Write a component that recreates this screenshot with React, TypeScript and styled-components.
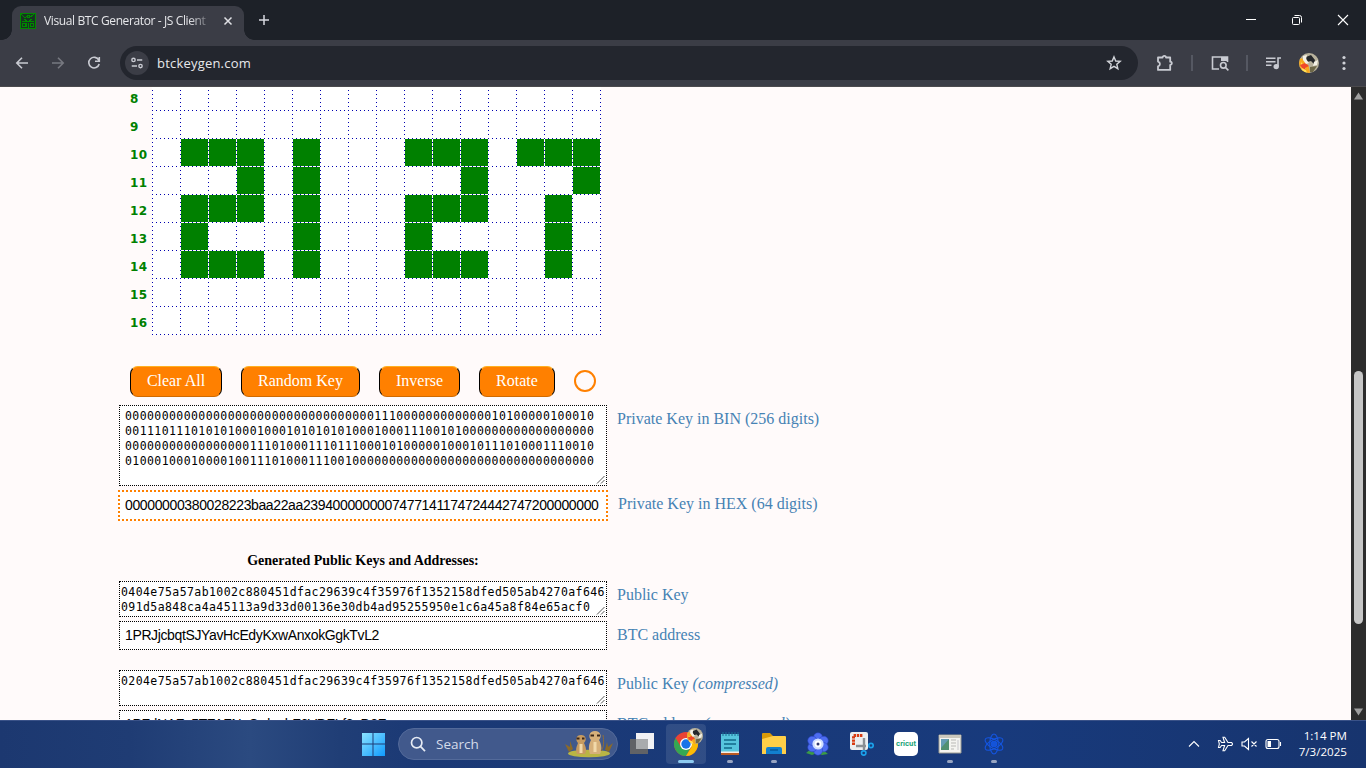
import React from "react";
import styled, { createGlobalStyle } from "styled-components";

const Global = createGlobalStyle`
  * { box-sizing: border-box; }
  body { margin: 0; overflow: hidden; }
`;

const ui = `"Open Sans", "Noto Sans", sans-serif`;
const sans = `"Liberation Sans", Arial, sans-serif`;
const serif = `"Liberation Serif", "Times New Roman", serif`;

const Screen = styled.div`
  width: 1366px; height: 768px; display: flex; flex-direction: column; overflow: hidden;
`;

/* ---------- browser chrome ---------- */
const TabStrip = styled.div`
  height: 40px; flex: none; background: #1d2128; display: flex; padding: 6px 0 0 12px;
`;
const Tab = styled.div`
  position: relative; width: 232px; height: 34px; background: #3b3d46; border-radius: 9px 9px 0 0;
  display: flex; align-items: center; padding: 0 10px 5px 8px;
  &::before, &::after {
    content: ""; position: absolute; bottom: 0; width: 10px; height: 10px;
  }
  &::before { left: -10px; background: radial-gradient(circle at 0 0, #1d2128 9.5px, #3b3d46 10px); }
  &::after { right: -10px; background: radial-gradient(circle at 100% 0, #1d2128 9.5px, #3b3d46 10px); }
`;
const TabTitle = styled.div`
  width: 168px; margin-left: 8px; flex: none; white-space: nowrap;
  font: 12px/16px ${ui}; letter-spacing: -0.38px; color: #e6e7ea;
  mask-image: linear-gradient(90deg, #000 145px, transparent 170px);
`;
const CloseIcon = styled.svg`margin-left: 11px; flex: none;`;
const PlusIcon = styled.svg`margin: 7px 0 0 13px;`;
const WindowButtons = styled.div`
  margin-left: auto; display: flex; gap: 34px; padding: 8px 17px 0 0; height: 20px;
`;
const Toolbar = styled.div`
  height: 47px; flex: none; background: #3b3d46; border-bottom: 1px solid #4b4a4d;
  display: flex; align-items: center; padding: 0 14px;
`;
const NavIcons = styled.div`display: flex; gap: 20px; width: 106px;`;
const AddressBar = styled.div`
  width: 1018px; height: 34px; border-radius: 17px; background: #23262e;
  display: flex; align-items: center; padding: 0 16px 0 5px;
  font: 13px/20px ${ui}; color: #e7e8eb; letter-spacing: 0.2px;
`;
const SiteChip = styled.div`
  width: 24px; height: 24px; border-radius: 50%; background: #3b3d46; margin-right: 8px;
  display: grid; place-items: center;
`;
const StarIcon = styled.svg`margin-left: auto;`;
const ToolIcons = styled.div`
  flex: 1; display: flex; align-items: center; justify-content: space-between; padding-left: 18px;
`;
const Divider = styled.i`width: 2px; height: 16px; background: #555862;`;

/* ---------- page ---------- */
const Viewport = styled.div`height: 633px; display: flex; overflow: hidden; background: #fffafa;`;
const Page = styled.main`flex: 1; padding-left: 118px; margin-top: -5px;`;
const Board = styled.div`display: flex; height: 253px;`;
const RowLabels = styled.div`
  width: 34px; padding: 3px 0 0 12px; font: bold 12px/28px "DejaVu Sans", Verdana, sans-serif;
  letter-spacing: 0.3px; color: green;
`;
const dotX = `repeating-linear-gradient(90deg, #0000b0 0 1px, #fff 1px 4px)`;
const dotY = `repeating-linear-gradient(180deg, #0000b0 0 1px, #fff 1px 4px)`;
const Grid = styled.div`
  width: 449px; height: 253px; padding: 0 1px 1px 0; background:
    ${dotX} 0 100% / 100% 1px no-repeat, ${dotY} 100% 0 / 1px 100% no-repeat, #fff;
  display: grid; grid-template-columns: repeat(16, 28px); grid-auto-rows: 28px;
`;
const Cell = styled.div<{ $on: boolean }>`
  background: ${dotX} 0 0 / 100% 1px no-repeat, ${dotY} 0 0 / 1px 100% no-repeat,
    ${(p) => (p.$on ? "green" : "#fff")};
`;
const Actions = styled.div`display: flex; align-items: center; gap: 19px; padding: 31px 0 0 12px; height: 62px;`;
const Action = styled.button<{ $w: number }>`
  width: ${(p) => p.$w}px; height: 31px; padding: 0 0 1px; border: 1px solid #000; border-top-color: #ffb020;
  border-bottom-color: #d06a00; border-radius: 8px; background: #ff8000; color: #fff; white-space: nowrap;
  font: 16px/20px ${serif};
`;
const Ring = styled.i`width: 22px; height: 22px; border: 2px solid #ff8000; border-radius: 50%; margin-top: -2px;`;

const Field = styled.div<{ $mt: number }>`display: flex; margin-top: ${(p) => p.$mt}px;`;
const Box = styled.div<{ $h: number; $kind: "bin" | "hex" | "key" | "addr" }>`
  width: ${(p) => (p.$kind === "hex" ? 490 : 488)}px; height: ${(p) => p.$h}px; flex: none;
  margin-left: ${(p) => (p.$kind === "hex" ? 0 : 1)}px;
  border: ${(p) => (p.$kind === "hex" ? "2px dotted #ff8000" : "1px dotted #000")};
  background: #fff; color: #000; white-space: pre; position: relative;
  ${(p) =>
    p.$kind === "bin" || p.$kind === "key"
      ? `font: 11.5px/15px "DejaVu Sans Mono", Consolas, monospace; letter-spacing: 0.408px;`
      : `font: 14px/15px ${sans}; letter-spacing: -0.372px;`}
  padding: ${(p) => ({ bin: "3px 5px", hex: "6px 5px", key: "3px 1px", addr: "6px 5px" })[p.$kind]};
`;
const Grip = styled.svg`position: absolute; right: 1px; bottom: 1px;`;
const Caption = styled.div<{ $top: number }>`
  padding: ${(p) => p.$top}px 0 0 10px; font: 16px/20px ${serif}; color: steelblue; white-space: nowrap;
`;
const Heading = styled.h4`
  margin: 30px 0 0; width: 490px; text-align: center; font: bold 14px/20px ${serif}; color: #000;
`;
const Scrollbar = styled.div`
  width: 15px; background: #2c2c2c; display: flex; flex-direction: column; align-items: center; padding: 5px 0 4px;
`;
const Thumb = styled.div`width: 9px; height: 253px; border-radius: 5px; background: #c6c6c6; margin: 271px 0 auto;`;

/* ---------- taskbar ---------- */
const Taskbar = styled.div`
  height: 48px; flex: none; display: flex; align-items: center; padding: 0 0 1px 361px; border-top: 1px solid #3a5288;
  background: linear-gradient(90deg, #1c3870 0, #1f3c74 130px, #2b4a80 250px, #203e76 340px, #1b3975 420px, #183a7c 1000px, #17346e);
  font-family: ${ui}; color: #fff;
`;
const SearchPill = styled.div`
  width: 220px; height: 32px; margin-left: 13px; border-radius: 16px; background: #41598c; border: 1px solid #536a9a;
  display: flex; align-items: center; padding: 0 3px 0 11px; font-size: 13.5px; color: #d5dcea;
  span { margin: 0 auto 0 10px; }
`;
const Apps = styled.div`display: flex; align-items: center; margin-left: 2px;`;
const AppSlot = styled.div<{ $active?: boolean; $dot?: boolean }>`
  position: relative; width: 44px; height: 46px; display: grid; place-items: center;
  &::before {
    content: ""; position: absolute; inset: 3px 2px; border-radius: 4px;
    background: ${(p) => (p.$active ? "rgba(255,255,255,.1)" : "none")};
  }
  &::after {
    content: ""; position: absolute; bottom: 4px; height: 3px; border-radius: 2px;
    left: ${(p) => (p.$active ? 14 : 19)}px; width: ${(p) => (p.$active ? 16 : 6)}px;
    background: ${(p) => (p.$active ? "#8ecbf0" : p.$dot ? "#98a5c2" : "none")};
  }
  svg { position: relative; }
`;
const Tray = styled.div`margin-left: auto; display: flex; align-items: center; padding-right: 19px;`;
const TrayIcon = styled.svg<{ $gap: number }>`
  flex: none; margin-left: ${(p) => p.$gap}px; fill: none; stroke: #fff; stroke-width: 1.1;
`;
const Clock = styled.div`
  width: 65px; text-align: right; font-size: 11.6px; line-height: 16px; white-space: nowrap; margin-top: 0;
`;

const rows = [
  "................", "................",
  ".###.#...###.###", "...#.#.....#...#", ".###.#...###..#.", ".#...#...#....#.", ".###.#...###..#.",
  "................", "................",
];

const Stroke = (p: React.SVGProps<SVGSVGElement>) => (
  <svg width="16" height="16" viewBox="0 0 16 16" fill="none" stroke="#c9cbd2" strokeWidth="1.6" {...p} />
);

const Avatar = () => (
  <svg width="20" height="20" viewBox="0 0 20 20">
    <clipPath id="av"><circle cx="10" cy="10" r="10" /></clipPath>
    <g clipPath="url(#av)">
      <path fill="#b8b29c" d="M0 0h20v20H0z" />
      <path fill="#f6a81c" d="M0 5l5 1 5 8 1 6H0z" />
      <path fill="#ffe257" d="M2 9l4 5 2 6H3z" />
      <path fill="#f0482a" d="M1 12l5-2 4 3-4 2 1 2-4-2z" />
      <path fill="#25272a" d="M7 4l5-2 4 5-1 4-3-3-4 1z" />
      <path fill="#f4f1e6" d="M4 3l4-1-1 4 3 4-3 1-3-4zM15 9l4-2-1 5-4 1z" />
      <path fill="#6e6848" d="M11 14l7-1-4 6h-3z" />
    </g>
  </svg>
);

const Handle = () => (
  <Grip width="9" height="9" viewBox="0 0 9 9" stroke="#444" strokeWidth=".9"><path d="M1 8.5 8.5 1M5 8.5 8.5 5" /></Grip>
);

const QrIcon = () => (
  <svg width="16" height="16" viewBox="0 0 16 16" shapeRendering="crispEdges">
    <path fill="#173321" d="M0 0h16v16H0z" />
    <path fill="none" stroke="#008a00" d="M.5.5h15v15H.5zM2.5 10.5h3v3h-3zM10.5 10.5h3v3h-3zM1 1l4 4 2-2 2 2 5-4M2 8.5h12M6.5 10v4M8.5 10v5M4 6l4 3 4-3M7 2h2v2H7z" />
  </svg>
);

const petals = [0, 60, 120, 180, 240, 300];

export default function App() {
  return (
    <Screen>
      <Global />
      <TabStrip>
        <Tab>
          <QrIcon />
          <TabTitle>Visual BTC Generator - JS Client</TabTitle>
          <CloseIcon width="10" height="10" viewBox="0 0 10 10" stroke="#e0e1e5" strokeWidth="1.5"><path d="M1.5 1.5l7 7m0-7l-7 7" /></CloseIcon>
        </Tab>
        <PlusIcon width="14" height="14" viewBox="0 0 14 14" stroke="#d7d9df" strokeWidth="1.5"><path d="M7 2v10M2 7h10" /></PlusIcon>
        <WindowButtons>
          <svg width="12" height="12" stroke="#fff"><path d="M1 5.5h10" /></svg>
          <svg width="12" height="12" fill="none" stroke="#fff"><rect x="1.5" y="3.5" width="7" height="7" rx="1" /><path d="M3.5 1.5h5a2 2 0 0 1 2 2v5" /></svg>
          <svg width="12" height="12" stroke="#fff" strokeWidth="1.1"><path d="M1 1l10 10M11 1L1 11" /></svg>
        </WindowButtons>
      </TabStrip>

      <Toolbar>
        <NavIcons>
          <Stroke><path d="M14 8H3M8 2.8L2.8 8 8 13.2" /></Stroke>
          <Stroke stroke="#777981"><path d="M2 8h11M8 2.8L13.2 8 8 13.2" /></Stroke>
          <Stroke><path d="M12.8 5.2A5.3 5.3 0 1 0 13.2 9M13.3 2v4.3H9" /></Stroke>
        </NavIcons>
        <AddressBar>
          <SiteChip>
            <Stroke width="14" height="14"><circle cx="4" cy="4.5" r="1.9" /><path d="M8 4.5h6M2 11.5h6" /><circle cx="12" cy="11.5" r="1.9" /></Stroke>
          </SiteChip>
          btckeygen.com
          <StarIcon width="16" height="16" viewBox="0 0 16 16" fill="none" stroke="#d3d5da" strokeWidth="1.4">
            <path d="M8 1.9l1.75 4.1 4.45.4-3.4 2.9 1.05 4.4L8 11.3l-3.85 2.4 1.05-4.4-3.4-2.9 4.45-.4z" />
          </StarIcon>
        </AddressBar>
        <ToolIcons>
          <Stroke width="18" height="18" viewBox="0 0 18 18" strokeWidth="1.8">
            <path d="M2 3.5h4.6a1.7 1.7 0 0 1 3.4 0h4.2v4.2a1.6 1.6 0 0 1 0 3.2v5H2v-3.6a2.4 2.4 0 0 0 0-4.7z" strokeLinejoin="round" />
          </Stroke>
          <Divider />
          <Stroke width="18" height="18" viewBox="0 0 18 18">
            <path d="M8 15H1.5V3H16.5V8" /><path d="M10 3h7v4h-7z" fill="#c9cbd2" stroke="none" /><circle cx="12.3" cy="11.3" r="2.8" /><path d="M14.4 13.4l3 3" />
          </Stroke>
          <Divider />
          <Stroke width="16" height="16"><path d="M1 3.2h9.5M1 6.7h9.5M1 10.2h5.5M13 11.5V3h3" /><circle cx="11.2" cy="11.6" r="1.9" fill="#c9cbd2" /></Stroke>
          <Avatar />
          <Stroke width="16" height="16" fill="#d0d2d8" stroke="none"><circle cx="8" cy="2.5" r="1.6" /><circle cx="8" cy="8" r="1.6" /><circle cx="8" cy="13.5" r="1.6" /></Stroke>
        </ToolIcons>
      </Toolbar>

      <Viewport>
        <Page>
          <Board>
            <RowLabels>{rows.map((_, i) => <div key={i}>{i + 8}</div>)}</RowLabels>
            <Grid>{rows.flatMap((r, y) => [...r].map((c, x) => <Cell key={`${y}-${x}`} $on={c === "#"} />))}</Grid>
          </Board>
          <Actions>
            <Action $w={92}>Clear All</Action>
            <Action $w={119}>Random Key</Action>
            <Action $w={81}>Inverse</Action>
            <Action $w={76}>Rotate</Action>
            <Ring />
          </Actions>
          <Field $mt={8}>
            <Box $h={81} $kind="bin">
              {"0000000000000000000000000000000000111000000000000010100000100010\n0011101110101010001000101010101000100011100101000000000000000000\n0000000000000000011101000111011100010100000100010111010001110010\n0100010001000010011101000111001000000000000000000000000000000000"}
              <Handle />
            </Box>
            <Caption $top={4}>Private Key in BIN (256 digits)</Caption>
          </Field>
          <Field $mt={4}>
            <Box $h={31} $kind="hex">00000000380028223baa22aa2394000000007477141174724442747200000000</Box>
            <Caption $top={4}>Private Key in HEX (64 digits)</Caption>
          </Field>
          <Heading>Generated Public Keys and Addresses:</Heading>
          <Field $mt={10}>
            <Box $h={36} $kind="key">
              {"0404e75a57ab1002c880451dfac29639c4f35976f1352158dfed505ab4270af646\n091d5a848ca4a45113a9d33d00136e30db4ad95255950e1c6a45a8f84e65acf0"}
              <Handle />
            </Box>
            <Caption $top={4}>Public Key</Caption>
          </Field>
          <Field $mt={4}>
            <Box $h={29} $kind="addr">1PRJjcbqtSJYavHcEdyKxwAnxokGgkTvL2</Box>
            <Caption $top={4}>BTC address</Caption>
          </Field>
          <Field $mt={20}>
            <Box $h={36} $kind="key">
              0204e75a57ab1002c880451dfac29639c4f35976f1352158dfed505ab4270af646
              <Handle />
            </Box>
            <Caption $top={4}>Public Key <i>(compressed)</i></Caption>
          </Field>
          <Field $mt={4}>
            <Box $h={29} $kind="addr">1PFdNAFp5TFAFNoCrdnphF6VDFLf3nD2F</Box>
            <Caption $top={4}>BTC address <i>(compressed)</i></Caption>
          </Field>
        </Page>
        <Scrollbar>
          <svg width="9" height="8"><path d="M4.5 0.5L9 7.5H0z" fill="#9f9f9f" /></svg>
          <Thumb />
          <svg width="9" height="8"><path d="M4.5 7.5L9 .5H0z" fill="#9f9f9f" /></svg>
        </Scrollbar>
      </Viewport>

      <Taskbar>
        <svg width="24" height="24" viewBox="0 0 24 24">
          <defs><linearGradient id="win" x2="1" y2="1"><stop stopColor="#8be3ff" /><stop offset="1" stopColor="#0f9bff" /></linearGradient></defs>
          <path fill="url(#win)" d="M1 1h10.5v10.5H1zM12.5 1H24v10.5H12.5zM1 12.5h10.5V24H1zM12.5 12.5H24V24H12.5z" />
        </svg>
        <SearchPill>
          <Stroke stroke="#e6ebf4" strokeWidth="1.7"><circle cx="6.7" cy="6.7" r="5.2" /><path d="M10.4 10.4l4.6 4.8" /></Stroke>
          <span>Search</span>
          <svg width="50" height="28" viewBox="0 0 50 28">
            <ellipse cx="25" cy="23.5" rx="21" ry="3.8" fill="#b9b544" />
            <path d="M5 22L1 14l5 3 0-6 3 8zM45 22l4-9-5 4-1-5-2 8z" fill="#8c6a28" />
            <path d="M13 24c-2-5 0-8 1-11-3-3-2-8 3-8 5 0 6 5 3 8 2 4 3 8 1 11z" fill="#c79b60" />
            <path d="M26 24c-2-6-1-10 1-14-3-3-2-9 4-9s7 6 4 9c3 5 3 10 1 14z" fill="#d6b07a" />
            <path d="M12.5 8.5h3M18 8.5h2.500M26.500 5.500h3.500M33 5.500h3" stroke="#3a2718" strokeWidth="2" fill="none" />
            <path d="M17 14v9M31 12v10" stroke="#f1d9aa" strokeWidth="3" />
            <path d="M37 21c3-3 3-10 2-16" stroke="#8f6d38" fill="none" />
          </svg>
        </SearchPill>
        <Apps>
          <AppSlot>
            <svg width="24" height="24" viewBox="0 0 24 24"><path d="M6 1h18v16H6z" fill="#f2f2f4" /><path d="M0 7h18v15H0z" fill="#606266" /><path d="M6 7h12v10H6z" fill="#a9abad" /></svg>
          </AppSlot>
          <AppSlot $active>
            <svg width="24" height="24" viewBox="0 0 24 24" overflow="visible">
              <circle cx="12" cy="12" r="12" fill="#ea4335" />
              <path d="M1.600 6A12 12 0 0 0 12 24l5-9-10 0z" fill="#34a853" />
              <path d="M12 6h10.400A12 12 0 0 1 12 24l5.500-9z" fill="#fbbc05" />
              <circle cx="12" cy="12" r="6" fill="#fff" /><circle cx="12" cy="12" r="4.700" fill="#1a73e8" />
              <g transform="translate(13 -4) scale(.8)"><Avatar /></g>
            </svg>
          </AppSlot>
          <AppSlot $dot>
            <svg width="20" height="24" viewBox="0 0 20 24"><path d="M1 2h18v19H1z" fill="#56c5dd" /><path d="M1 21h18v2H1z" fill="#b85a24" /><path d="M1 19.5h18V21H1z" fill="#f2eee8" /><path d="M4 8h12M4 12h12M4 16h8" stroke="#126a89" strokeWidth="1.6" /><path d="M3 0v4M6 0v4M9 0v4M12 0v4M15 0v4M18 0v4" stroke="#1b6f92" /></svg>
          </AppSlot>
          <AppSlot $dot>
            <svg width="24" height="24" viewBox="0 0 24 24"><path d="M0 2q0-1 1-1h7l3 3v4H0z" fill="#d99a08" /><path d="M0 7l11-3h12q1 0 1 1v17H0z" fill="#ffcf48" /><path d="M4 22v-5q0-2 2-2h12q2 0 2 2v5z" fill="#1280cf" /><path d="M8 18h8" stroke="#075a9c" strokeWidth="1.5" /></svg>
          </AppSlot>
          <AppSlot>
            <svg width="26" height="26" viewBox="-13 -13 26 26">
              <path d="M-12 9l6-5 4 3 6-2 6 5-6 1-5-2-5 2z" fill="#3b9b45" />
              {petals.map((a) => <ellipse key={a} cx="0" cy="-6.2" rx="4.6" ry="5" fill="#4d6df0" stroke="#2840c4" strokeWidth=".5" transform={`rotate(${a})`} />)}
              <circle r="5.6" fill="#cddcff" /><circle r="3.4" fill="#fff" /><circle r="1.5" fill="#303870" />
            </svg>
          </AppSlot>
          <AppSlot>
            <svg width="24" height="24" viewBox="0 0 24 24"><rect width="18" height="18" rx="2" fill="#eceef0" /><path d="M3.5 13V3.5H13" fill="none" stroke="#d83b12" strokeWidth="3" strokeDasharray="2.4 .8" /><path d="M6 14h10M14 6v12" stroke="#8b8f94" strokeWidth="2.4" /><circle cx="21" cy="13.5" r="2.2" fill="none" stroke="#1ba1ea" strokeWidth="1.7" /><circle cx="13.7" cy="21" r="2.2" fill="none" stroke="#1ba1ea" strokeWidth="1.7" /></svg>
          </AppSlot>
          <AppSlot>
            <svg width="24" height="24" viewBox="0 0 24 24"><rect width="24" height="24" rx="5" fill="#fff" /><text x="12" y="14" textAnchor="middle" fontFamily="Inter" fontSize="7" fontWeight="700" fill="#16a276">cricut</text></svg>
          </AppSlot>
          <AppSlot $dot>
            <svg width="24" height="20" viewBox="0 0 24 20"><path d="M1 1h22v18H1z" fill="#f4f4f0" stroke="#9d9c92" /><path d="M1 1h22v3H1z" fill="#ccc9bd" /><path d="M3 5h8v11H3z" fill="#529071" /><path d="M3 5h8l-8 9z" fill="#659cb4" /><path d="M13 6h5M13 9h5M13 12h5M13 15h3" stroke="#b9b9b5" /><path d="M20 6v10" stroke="#ddd" strokeWidth="2" /></svg>
          </AppSlot>
          <AppSlot $dot>
            <svg width="22" height="22" viewBox="-11 -11 22 22" fill="none" stroke="#1455e0" strokeWidth="1.1">
              {[30, 90, 150].map((a) => <ellipse key={a} rx="10" ry="4.3" transform={`rotate(${a})`} />)}
              <circle r="2.7" fill="#1554d8" />
            </svg>
          </AppSlot>
        </Apps>
        <Tray>
          <TrayIcon $gap={0} width="12" height="8" strokeWidth="1.5"><path d="M1 6.5l5-5 5 5" /></TrayIcon>
          <TrayIcon $gap={17} width="18" height="18" viewBox="0 0 18 18"><path d="M1.5 5.5h1.6l1.5 2h3L6 2.3h1.7L11 7.5h3.5q2 1.4 0 3H11l-3.3 5.2H6l1.6-5.2h-3l-1.5 2H1.5L2.3 9z" /></TrayIcon>
          <TrayIcon $gap={6} width="17" height="14" viewBox="0 0 17 14"><path d="M1 5h2.5L7.5 1.5v11L3.5 9H1zM10.5 4.5l5 5M15.500 4.500l-5 5" /></TrayIcon>
          <TrayIcon $gap={7} width="17" height="12" viewBox="0 0 17 12"><rect x="1" y="1.5" width="13" height="9" rx="2" /><path d="M15.5 4v4" /><path d="M2.5 3H6v6H2.5z" fill="#fff" stroke="none" /></TrayIcon>
          <Clock>1:14 PM<br />7/3/2025</Clock>
        </Tray>
      </Taskbar>
    </Screen>
  );
}
